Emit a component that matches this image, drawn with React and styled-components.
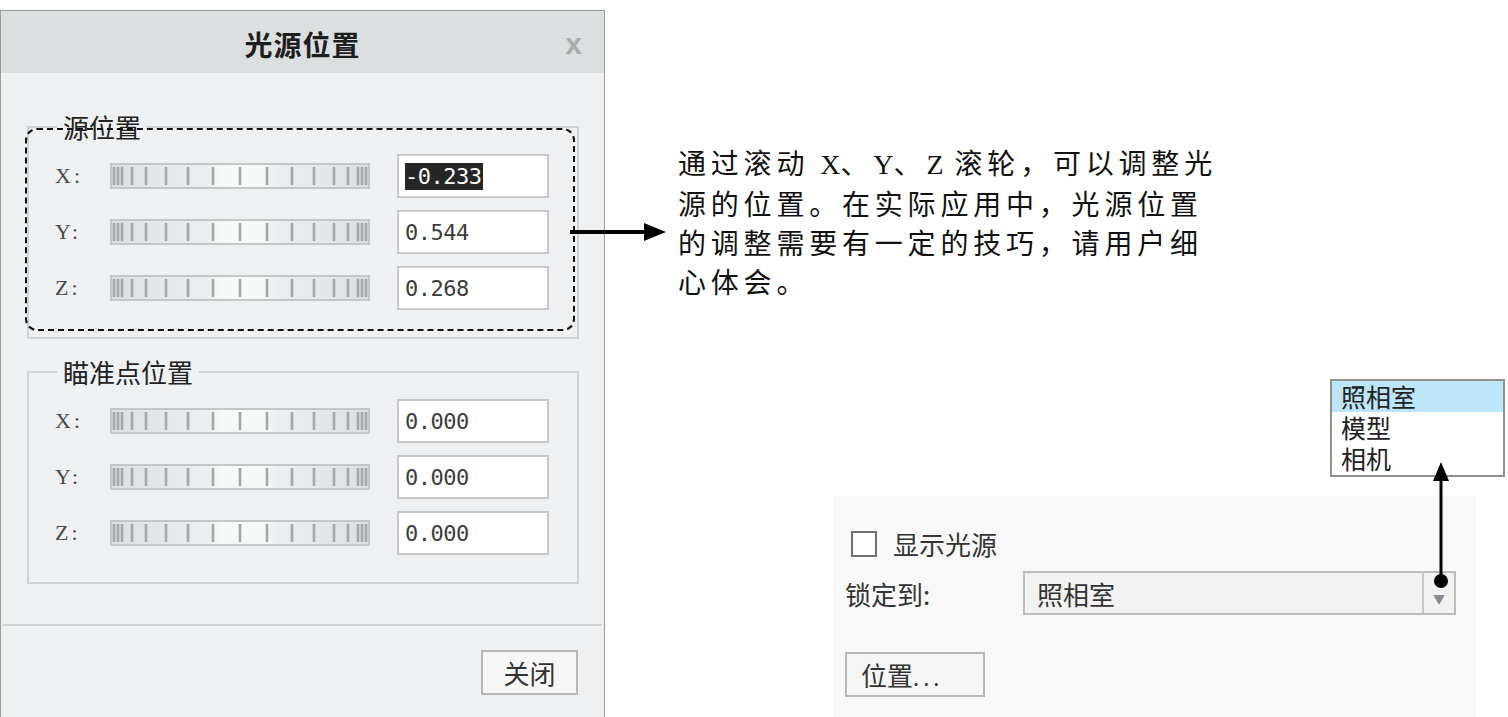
import React from 'react'
import styled, { createGlobalStyle } from 'styled-components'

const GlobalStyle = createGlobalStyle`
  html, body {
    margin: 0;
    padding: 0;
    background: #fff;
  }
  body {
    font-family: "Noto Sans CJK SC", "Noto Sans", sans-serif;
  }
`

const Page = styled.div`
  position: relative;
  width: 1508px;
  height: 717px;
  overflow: hidden;
  display: flex;
  background: #fff;
`

/* ---------- dialog ---------- */

const Dialog = styled.div`
  flex: none;
  width: 605px;
  height: 730px;
  margin-top: 10px;
  box-sizing: border-box;
  border: 1px solid #9c9c9c;
  background: #eff0f1;
  display: flex;
  flex-direction: column;
`

const TitleBar = styled.div`
  height: 62px;
  background: #dcdfe0;
  display: grid;
  grid-template-columns: 1fr auto 1fr;
  align-items: center;
`

const Title = styled.div`
  grid-column: 2;
  font-size: 28px;
  font-weight: 700;
  color: #1e1e1e;
  letter-spacing: 1px;
  padding-top: 4px;
`

const CloseX = styled.div`
  justify-self: end;
  margin-right: 22px;
  font: bold 30px/1 "Liberation Sans", sans-serif;
  color: #a9abad;
  padding-top: 4px;
`

const Body = styled.div`
  padding: 39px 25px 0 26px;
  display: flex;
  flex-direction: column;
  gap: 18px;
`

const Group = styled.fieldset`
  margin: 0;
  padding: 12px 28px 27px 26px;
  border: 2px solid #cfd2d4;
  min-width: 0;
  display: flex;
  flex-direction: column;
  gap: 12px;
`

const Legend = styled.legend`
  margin-left: 2px;
  padding: 0 6px;
  font-size: 26px;
  line-height: 30px;
  color: #222;
`

const Row = styled.div`
  display: flex;
  align-items: center;
  height: 44px;
`

const AxisLabel = styled.div`
  width: 55px;
  font: 22px "Liberation Serif", serif;
  letter-spacing: 3px;
  color: #4a4a4a;
`

const Field = styled.div`
  margin-left: 27px;
  width: 152px;
  height: 44px;
  box-sizing: border-box;
  border: 2px solid #c6c8c9;
  background: #fff;
  display: flex;
  align-items: center;
  padding-left: 6px;
  font: 22px "DejaVu Sans Mono", monospace;
  letter-spacing: -0.5px;
  color: #3c3c3c;
`

const Selected = styled.span`
  background: #262626;
  color: #fff;
  padding: 1px 2px 1px 0;
`

const Footer = styled.div`
  margin: 40px 2px 0;
  border-top: 2px solid #d0d2d4;
  padding: 24px 24px 0 0;
  display: flex;
  justify-content: flex-end;
`

const Button = styled.button`
  width: ${p => p.w || 97}px;
  height: 45px;
  box-sizing: border-box;
  border: 2px solid #b6b6b6;
  background: #f6f6f6;
  font-family: "Noto Sans CJK SC", sans-serif;
  font-size: 26px;
  color: #333;
  padding: 0;
  text-align: ${p => (p.left ? 'left' : 'center')};
  padding-left: ${p => (p.left ? 14 : 0)}px;
`

const Dots = styled.span`
  letter-spacing: 4px;
  font-size: 22px;
`

const tickXs = [4, 8, 12, 22, 36, 56, 78, 103, 130, 157, 182, 204, 224, 238, 248, 252, 256]

const Wheel = () => (
  <svg width="260" height="26" viewBox="0 0 260 26">
    <defs>
      <linearGradient id="wg" x1="0" x2="1" y1="0" y2="0">
        <stop offset="0" stopColor="#dcdedf" />
        <stop offset="0.38" stopColor="#eceeef" />
        <stop offset="0.42" stopColor="#f6f8f8" />
        <stop offset="0.6" stopColor="#f6f8f8" />
        <stop offset="0.64" stopColor="#eceeef" />
        <stop offset="1" stopColor="#dcdedf" />
      </linearGradient>
    </defs>
    <rect x="1" y="1" width="258" height="24" fill="url(#wg)" stroke="#c4c6c7" strokeWidth="2" />
    {tickXs.map(x => (
      <rect key={x} x={x - 1.3} y="4" width="2.6" height="18" fill="#a4a6a7" />
    ))}
  </svg>
)

const AxisRow = ({ axis, children }) => (
  <Row>
    <AxisLabel>{axis}:</AxisLabel>
    <Wheel />
    <Field>{children}</Field>
  </Row>
)

/* ---------- right side ---------- */

const RightArea = styled.div`
  flex: 1;
  display: flex;
  flex-direction: column;
`

const Note = styled.p`
  margin: 143px 0 0 73px;
  font-size: 28px;
  line-height: 39px;
  letter-spacing: 4.8px;
  color: #111;
  white-space: nowrap;
`

const Latin = styled.span`
  font-family: "Liberation Serif", serif;
  letter-spacing: 0;
  font-size: 28px;
`

const Panel = styled.div`
  position: relative;
  margin-top: auto;
  margin-right: 32px;
  align-self: flex-end;
  width: 643px;
  height: 221px;
  box-sizing: border-box;
  background: #f8f8f8;
  padding: 35px 20px 0 12px;
  display: flex;
  flex-direction: column;
`

const CheckRow = styled.div`
  display: flex;
  align-items: center;
  gap: 16px;
  padding-left: 6px;
  font-size: 26px;
  line-height: 26px;
  color: #333;
`

const CheckBox = styled.span`
  width: 26px;
  height: 26px;
  box-sizing: border-box;
  border: 2px solid #707070;
  background: #fff;
`

const LockRow = styled.div`
  margin-top: 14px;
  display: flex;
  align-items: center;
  font-size: 26px;
  color: #333;
`

const LockLabel = styled.div`
  width: 178px;
`

const Select = styled.div`
  width: 433px;
  height: 44px;
  box-sizing: border-box;
  border: 2px solid #bcbcbc;
  background: #f2f2f2;
  display: flex;
  align-items: center;
`

const SelectValue = styled.div`
  flex: 1;
  padding-left: 12px;
`

const SelectArrow = styled.div`
  width: 32px;
  height: 100%;
  border-left: 2px solid #c8c8c8;
  display: flex;
  align-items: center;
  justify-content: center;
  color: #8a8a8a;
  font-size: 12px;
  padding-top: 10px;
  box-sizing: border-box;
`

const ButtonRow = styled.div`
  margin-top: 37px;
  display: flex;
`

const Popup = styled.div`
  position: absolute;
  left: 497px;
  top: -117px;
  width: 175px;
  height: 98px;
  box-sizing: border-box;
  border: 2px solid #8f8f8f;
  background: #fff;
`

const PopupItem = styled.div`
  height: 31px;
  line-height: 31px;
  padding-left: 9px;
  font-size: 25px;
  color: #222;
  background: ${p => (p.active ? '#bde5f8' : 'transparent')};
`

/* ---------- annotations ---------- */

const DashedBox = styled.div`
  position: absolute;
  left: 25px;
  top: 128px;
  width: 550px;
  height: 203px;
  box-sizing: border-box;
  border: 2px dashed #111;
  border-radius: 12px;
  pointer-events: none;
`

const Overlay = styled.svg`
  position: absolute;
  left: ${p => p.x}px;
  top: ${p => p.y}px;
  overflow: visible;
`

export default function App() {
  return (
    <Page>
      <GlobalStyle />
      <Dialog>
        <TitleBar>
          <Title>光源位置</Title>
          <CloseX>x</CloseX>
        </TitleBar>
        <Body>
          <Group>
            <Legend>源位置</Legend>
            <AxisRow axis="X"><Selected>-0.233</Selected></AxisRow>
            <AxisRow axis="Y">0.544</AxisRow>
            <AxisRow axis="Z">0.268</AxisRow>
          </Group>
          <Group>
            <Legend>瞄准点位置</Legend>
            <AxisRow axis="X">0.000</AxisRow>
            <AxisRow axis="Y">0.000</AxisRow>
            <AxisRow axis="Z">0.000</AxisRow>
          </Group>
        </Body>
        <Footer>
          <Button>关闭</Button>
        </Footer>
      </Dialog>

      <RightArea>
        <Note>
          通过滚动 <Latin>X</Latin>、<Latin>Y</Latin>、<Latin>Z</Latin> 滚轮，可以调整光<br />
          源的位置。在实际应用中，光源位置<br />
          的调整需要有一定的技巧，请用户细<br />
          心体会。
        </Note>

        <Panel>
          <CheckRow>
            <CheckBox />
            显示光源
          </CheckRow>
          <LockRow>
            <LockLabel>锁定到:</LockLabel>
            <Select>
              <SelectValue>照相室</SelectValue>
              <SelectArrow>▼</SelectArrow>
            </Select>
          </LockRow>
          <ButtonRow>
            <Button w={140} left>位置<Dots>...</Dots></Button>
          </ButtonRow>

          <Popup>
            <PopupItem active>照相室</PopupItem>
            <PopupItem>模型</PopupItem>
            <PopupItem>相机</PopupItem>
          </Popup>

          <Overlay x={598} y={-36} width="20" height="130">
            <line x1="10" y1="121" x2="10" y2="18" stroke="#000" strokeWidth="3" />
            <polygon points="10,2 2,21 18,21" fill="#000" />
            <circle cx="10" cy="121" r="7" fill="#000" />
          </Overlay>
        </Panel>
      </RightArea>

      <DashedBox />
      <Overlay x={568} y={222} width="100" height="20">
        <line x1="2" y1="10" x2="82" y2="10" stroke="#000" strokeWidth="4" />
        <polygon points="76,1 98,10 76,19" fill="#000" />
      </Overlay>
    </Page>
  )
}
